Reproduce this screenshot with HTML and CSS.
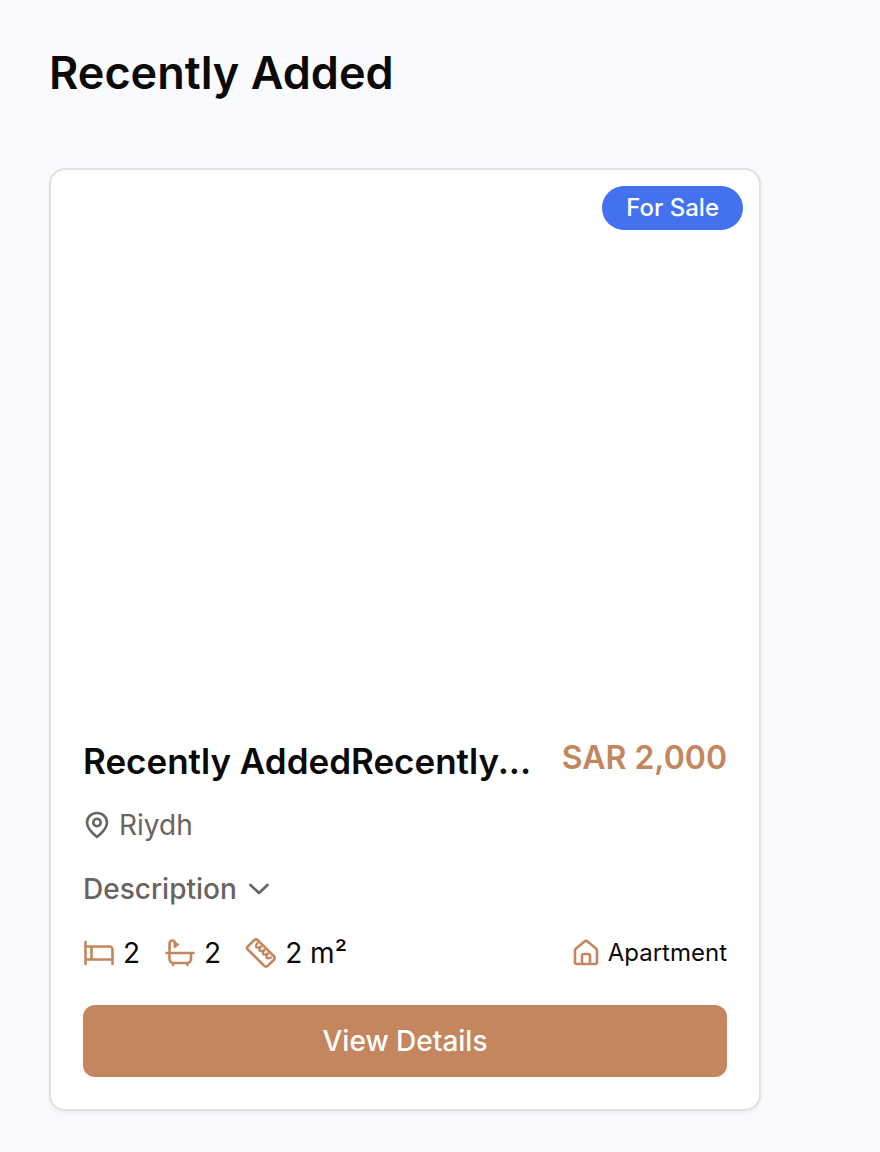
FILE: index.html
```html
<!DOCTYPE html>
<html lang="en">
<head>
<meta charset="utf-8">
<meta name="viewport" content="width=device-width, initial-scale=1">
<title>Recently Added</title>
<link rel="stylesheet" href="styles.css">
</head>
<body>
<main class="page">
  <h1 class="page-title">Recently Added</h1>
  <article class="card">
    <div class="card-media"><span class="badge">For Sale</span></div>
    <div class="card-body">
      <div class="card-head">
        <h2 class="card-title">Recently AddedRecently...</h2>
        <p class="price">SAR 2,000</p>
      </div>
      <p class="location">
        <svg class="icon" viewBox="0 0 28 28" aria-hidden="true"><path d="M14 26C11.5 24 4 18 4 11.500a10 9.500 0 0 1 20 0C24 18 16.500 24 14 26Z"/><circle cx="14" cy="11.500" r="3.700"/></svg>
        Riydh
      </p>
      <button class="description" type="button">Description
        <svg class="icon" viewBox="0 0 28 28" aria-hidden="true"><path d="m5.500 10 8.500 8 8.500-8"/></svg>
      </button>
      <div class="facts">
        <ul class="specs">
          <li class="spec"><svg class="icon-large" viewBox="0 0 32 32" aria-hidden="true"><path d="M2.500 5v22M2.500 9.500h24a3 3 0 0 1 3 3V27M2.500 22.500h27M8.500 9.500v13"/></svg>2</li>
          <li class="spec"><svg class="icon-large" viewBox="0 0 32 32" aria-hidden="true"><path d="M2.500 16h27M5.500 16V7q0-3.500 3-3.500 2 0 3 3M5.500 16v6a4 4 0 0 0 4 4h13.500a4 4 0 0 0 4-4v-6M9.500 26l-.5 2M23 26l.5 2"/><path fill="currentColor" stroke-width="1.500" d="m10 6 4.500 1.500-4 3Z"/></svg>2</li>
          <li class="spec"><svg class="icon-large" viewBox="0 0 32 32" aria-hidden="true"><path d="M2.800 9.500 9 3.300q2-2 4 0L28.700 19q2 2 0 4L23 28.700q-2 2-4 0L2.800 12.500q-1.500-1.500 0-3Z"/><path stroke-width="2.300" d="M12.500 6c-3 4-1.500 6 3.500 3.500-3 4-1.500 6 3.500 3.500-3 4-1.500 6 3.500 3.500-3 4-1.500 6 3 4"/></svg>2 m²</li>
        </ul>
        <p class="type"><svg class="icon" viewBox="0 0 28 28" aria-hidden="true"><path d="M3 11.500q0-1 1-2l8.500-7q1.500-1.200 3 0L24 9.500q1 1 1 2V23q0 2-2 2H5q-2 0-2-2ZM10 25V17q0-2 2-2h4q2 0 2 2v8"/></svg>Apartment</p>
      </div>
      <button class="action" type="button">View Details</button>
    </div>
  </article>
</main>
</body>
</html>
```
FILE: styles.css
```css
* { box-sizing: border-box; }
body, h1, h2, p, ul { margin: 0; padding: 0; }
body {
  background: #f8fafe;
  color: #0c0a09;
  font-family: Inter, "Liberation Sans", sans-serif;
}
button { font: inherit; border: 0; cursor: pointer; }
svg { fill: none; stroke: currentColor; stroke-width: 2.6; stroke-linecap: round; stroke-linejoin: round; flex: none; }
.page { padding: 41px 49px; }
.page-title { font-size: 45px; font-weight: 600; line-height: 64px; }
.card {
  max-width: 712px;
  margin-top: 63px;
  background: #fff;
  border: 2px solid #e3e1e0;
  border-radius: 16px;
  box-shadow: 0 2px 4px rgb(0 0 0 / 5%);
}
.card-media {
  display: flex;
  justify-content: flex-end;
  align-items: flex-start;
  min-height: 539px;
  padding: 16px;
}
.badge {
  padding: 0 24px;
  border-radius: 22px;
  background: #4371ef;
  color: #fff;
  font-size: 24px;
  font-weight: 500;
  line-height: 44px;
}
.card-body { padding: 32px; }
.card-head { display: flex; align-items: flex-start; gap: 24px; }
.card-title {
  flex: 1;
  min-width: 0;
  font-size: 35px;
  font-weight: 600;
  line-height: 40px;
}
.price { color: #c4865e; font-size: 32px; font-weight: 600; line-height: 34px; white-space: nowrap; }
.icon { width: 28px; height: 28px; }
.icon-large { width: 32px; height: 32px; color: #c4865e; }
.location, .description, .spec, .type { display: flex; align-items: center; gap: 8px; }
.location { margin-top: 24px; color: #69645f; font-size: 28px; line-height: 40px; }
.description {
  margin-top: 24px;
  padding: 0;
  background: none;
  color: #69645f;
  font-size: 28px;
  font-weight: 500;
  line-height: 40px;
}
.facts { display: flex; align-items: center; justify-content: space-between; margin-top: 24px; }
.specs { display: flex; gap: 24px; list-style: none; font-size: 28px; line-height: 40px; }
.type { font-size: 24px; line-height: 32px; }
.type .icon { color: #c4865e; }
.action {
  width: 100%;
  margin-top: 32px;
  border-radius: 12px;
  background: #c4865e;
  color: #fff;
  font-size: 28px;
  font-weight: 500;
  line-height: 40px;
  padding: 16px;
}
```
